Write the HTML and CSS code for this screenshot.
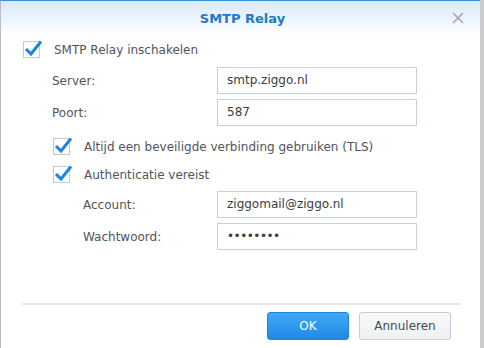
FILE: index.html
```html
<!DOCTYPE html>
<html lang="nl">
<head>
  <meta charset="UTF-8" />
  <title>SMTP Relay</title>
  <link rel="stylesheet" href="styles.css">
</head>
<body>

  <div class="dialog">
    <div class="header">
      <span class="title">SMTP Relay</span>
      <svg class="close" width="12" height="12" viewBox="0 0 12 12">
        <path d="M1 1 L11 11 M11 1 L1 11" stroke="#a3a7ab" stroke-width="1.6" fill="none"/>
      </svg>
    </div>

    <div class="content">
      <div class="check-row">
        <svg class="check" width="20" height="19" viewBox="0 0 20 19">
          <rect x="0.5" y="2.5" width="16" height="16" fill="#fff" stroke="#c2cad2"/>
          <path d="M3 10 L8 15 L18 2.5" stroke="#1a86de" stroke-width="3" fill="none" stroke-linejoin="miter"/>
        </svg>
        <span>SMTP Relay inschakelen</span>
      </div>

      <div class="field first">
        <label>Server:</label>
        <div class="input">smtp.ziggo.nl</div>
      </div>
      <div class="field">
        <label>Poort:</label>
        <div class="input">587</div>
      </div>

      <div class="check-row sub tls">
        <svg class="check" width="20" height="19" viewBox="0 0 20 19">
          <rect x="0.5" y="2.5" width="16" height="16" fill="#fff" stroke="#c2cad2"/>
          <path d="M3 10 L8 15 L18 2.5" stroke="#1a86de" stroke-width="3" fill="none"/>
        </svg>
        <span>Altijd een beveiligde verbinding gebruiken (TLS)</span>
      </div>
      <div class="check-row sub auth">
        <svg class="check" width="20" height="19" viewBox="0 0 20 19">
          <rect x="0.5" y="2.5" width="16" height="16" fill="#fff" stroke="#c2cad2"/>
          <path d="M3 10 L8 15 L18 2.5" stroke="#1a86de" stroke-width="3" fill="none"/>
        </svg>
        <span>Authenticatie vereist</span>
      </div>

      <div class="field sub first-sub">
        <label>Account:</label>
        <div class="input">ziggomail@ziggo.nl</div>
      </div>
      <div class="field sub">
        <label>Wachtwoord:</label>
        <div class="input password">••••••••</div>
      </div>
    </div>

    <div class="footer">
      <button class="btn primary">OK</button>
      <button class="btn">Annuleren</button>
    </div>
  </div>

</body>
</html>
```

FILE: styles.css
```css
html, body {
  margin: 0;
  padding: 0;
}

body {
  background-color: #c9cbcd;
  font-family: "DejaVu Sans", Verdana, sans-serif;
  font-size: 12px;
  color: #50555a;
  width: 484px;
  height: 348px;
  overflow: hidden;
}

.dialog {
  width: 480px;
  height: 348px;
  background-color: #fff;
  border-left: 1px solid #b9bdc1;
  border-top: 1px solid #3b8ed6;
  box-sizing: border-box;
  display: flex;
  flex-direction: column;
}

.header {
  height: 34px;
  flex: none;
  display: flex;
  align-items: center;
  justify-content: center;
  position: relative;
  background: linear-gradient(#d8e9f8, #ffffff);
}

.title {
  font-weight: bold;
  font-size: 13px;
  color: #2379c8;
  margin-left: 4px;
}

.close {
  position: absolute;
  right: 16px;
  top: 11px;
}

.content {
  padding-left: 22px;
  flex: 1;
}

.check-row {
  display: flex;
  align-items: center;
  height: 24px;
  margin-top: 3px;
}

.check {
  flex: none;
  margin-right: 11px;
  margin-top: -3px;
}

.check-row.sub {
  padding-left: 30px;
  height: 25px;
}

.check-row.tls {
  margin-top: 8px;
}

.check-row.auth {
  margin-top: 3px;
}

.field {
  display: flex;
  align-items: center;
  padding-left: 29px;
  margin-top: 5px;
}

.field label {
  width: 165px;
}

.field.sub {
  padding-left: 60px;
}

.field.sub label {
  width: 134px;
}

.field.first-sub {
  margin-top: 4px;
}

.input {
  width: 200px;
  height: 27px;
  box-sizing: border-box;
  border: 1px solid #c9d0d7;
  padding-left: 9px;
  line-height: 25px;
  color: #3a3d40;
}

.password {
  letter-spacing: -0.5px;
  font-size: 12px;
}

.footer {
  flex: none;
  margin: 0 19px 0 21px;
  border-top: 2px solid #e6e8ea;
  height: 45px;
  display: flex;
  justify-content: flex-end;
  align-items: flex-start;
  padding-top: 7px;
  padding-right: 10px;
  box-sizing: border-box;
}

.btn {
  height: 28px;
  margin-left: 10px;
  border-radius: 3px;
  font-family: "DejaVu Sans", Verdana, sans-serif;
  font-size: 12px;
  border: 1px solid #c6cdd4;
  background: linear-gradient(#f8fafc, #edf1f4);
  color: #454a50;
  width: 92px;
  padding: 0;
}

.btn.primary {
  width: 82px;
  border-color: #1f86dc;
  background: linear-gradient(#3fa8f6, #1f8ae6);
  color: #fff;
}
```
